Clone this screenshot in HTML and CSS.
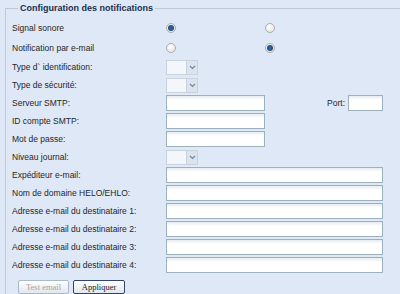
FILE: index.html
```html
<!DOCTYPE html>
<html lang="fr">
<head>
  <meta charset="UTF-8">
  <meta name="viewport" content="width=device-width, initial-scale=1.0">
  <title>Configuration des notifications</title>
  <link rel="stylesheet" href="styles.css">
</head>
<body>
  <fieldset class="panel">
    <legend class="panel-title">Configuration des notifications</legend>

    <div class="form">
      <!-- Choix oui / non -->
      <div class="row row-radio">
        <span class="label">Signal sonore</span>
        <div class="choices">
          <span class="radio checked"></span>
          <span class="radio"></span>
        </div>
      </div>
      <div class="row row-radio">
        <span class="label">Notification par e-mail</span>
        <div class="choices">
          <span class="radio"></span>
          <span class="radio checked"></span>
        </div>
      </div>

      <!-- Listes -->
      <div class="row">
        <span class="label">Type d` identification:</span>
        <div class="combo">
          <span class="combo-field"></span>
          <span class="combo-trigger"><svg width="7" height="5" viewBox="0 0 7 5"><path d="M1 1 L3.5 3.5 L6 1" fill="none" stroke="#6f87a8" stroke-width="1.2"/></svg></span>
        </div>
      </div>
      <div class="row">
        <span class="label">Type de sécurité:</span>
        <div class="combo">
          <span class="combo-field"></span>
          <span class="combo-trigger"><svg width="7" height="5" viewBox="0 0 7 5"><path d="M1 1 L3.5 3.5 L6 1" fill="none" stroke="#6f87a8" stroke-width="1.2"/></svg></span>
        </div>
      </div>

      <!-- Serveur -->
      <div class="row">
        <span class="label">Serveur SMTP:</span>
        <div class="inline">
          <input class="field field-short" type="text">
          <span class="label label-port">Port:</span>
          <input class="field field-port" type="text">
        </div>
      </div>
      <div class="row">
        <span class="label">ID compte SMTP:</span>
        <input class="field field-short" type="text">
      </div>
      <div class="row">
        <span class="label">Mot de passe:</span>
        <input class="field field-short" type="password">
      </div>
      <div class="row">
        <span class="label">Niveau journal:</span>
        <div class="combo">
          <span class="combo-field"></span>
          <span class="combo-trigger"><svg width="7" height="5" viewBox="0 0 7 5"><path d="M1 1 L3.5 3.5 L6 1" fill="none" stroke="#6f87a8" stroke-width="1.2"/></svg></span>
        </div>
      </div>

      <!-- Adresses -->
      <div class="row">
        <span class="label">Expéditeur e-mail:</span>
        <input class="field" type="text">
      </div>
      <div class="row">
        <span class="label">Nom de domaine HELO/EHLO:</span>
        <input class="field" type="text">
      </div>
      <div class="row">
        <span class="label">Adresse e-mail du destinataire 1:</span>
        <input class="field" type="text">
      </div>
      <div class="row">
        <span class="label">Adresse e-mail du destinataire 2:</span>
        <input class="field" type="text">
      </div>
      <div class="row">
        <span class="label">Adresse e-mail du destinataire 3:</span>
        <input class="field" type="text">
      </div>
      <div class="row">
        <span class="label">Adresse e-mail du destinataire 4:</span>
        <input class="field" type="text">
      </div>
    </div>

    <div class="actions">
      <button class="btn" disabled>Test email</button>
      <button class="btn">Appliquer</button>
    </div>
  </fieldset>
</body>
</html>
```

FILE: styles.css
```css
body {
  background-color: #dfe8f6; /* Fond bleu clair */
  margin: 0;
  overflow: hidden;
  font-family: 'Liberation Sans', Arial, sans-serif;
}

.panel {
  margin: 1px 0 0 5px;
  padding: 3px 0 0 6px;
  min-width: 0;
  border: 1px solid #bccadb;
  border-right: none; /* le cadre continue hors de la vue */
}

.panel-title {
  margin-left: 6px;
  padding: 0 2px;
  line-height: 14px;
  font-size: 9px;
  font-weight: bold;
  color: #1a2f4f;
}

.row {
  display: grid;
  grid-template-columns: 154px 217px;
  align-items: center;
  height: 18px;
}

.row-radio {
  height: 20px;
}

.label {
  font-size: 8.5px;
  color: #262626;
  white-space: nowrap;
}

.choices {
  display: flex;
  gap: 89px;
}

.radio {
  width: 10px;
  height: 10px;
  box-sizing: border-box;
  border: 1px solid #adadad;
  border-radius: 50%;
  background: radial-gradient(circle at 40% 35%, #ffffff, #dedede);
  display: flex;
  justify-content: center;
  align-items: center;
}

.radio.checked::after {
  content: '';
  width: 4px;
  height: 4px;
  border-radius: 50%;
  background-color: #1f63a8;
  box-shadow: 0 0 0 1px #2c4a6e;
}

.combo {
  display: flex;
  width: 32px;
  height: 15px;
}

.combo-field {
  width: 20px;
  box-sizing: border-box;
  border: 1px solid #c9d3de;
  border-right: none;
  background-color: #f3f7fb;
}

.combo-trigger {
  width: 12px;
  box-sizing: border-box;
  border: 1px solid #c9d3de;
  background-color: #dbe3ec;
  display: flex;
  justify-content: center;
  align-items: center;
}

.field {
  width: 217px;
  height: 16px;
  margin: 0;
  padding: 0 2px;
  box-sizing: border-box;
  border: 1px solid #9db0bd;
  background: linear-gradient(#e6ecef, #ffffff 4px);
  font-size: 9px;
}

.field-short {
  width: 99px;
}

.inline {
  display: flex;
  align-items: center;
}

.label-port {
  margin-left: auto;
  margin-right: 3px;
}

.field-port {
  width: 35px;
}

.actions {
  display: flex;
  gap: 4px;
  padding: 6px 0 0 6px;
}

.btn {
  width: 52px;
  height: 14px;
  padding: 0;
  border: 1px solid #2f4466;
  border-radius: 2px;
  background: linear-gradient(#ffffff, #e2e7ee);
  font-family: 'Liberation Serif', 'Times New Roman', serif;
  font-size: 8.5px;
  color: #1a1a1a;
}

.btn:disabled {
  width: 51px;
  border-color: #a9b9cc;
  color: #a3a3a3;
}
```
